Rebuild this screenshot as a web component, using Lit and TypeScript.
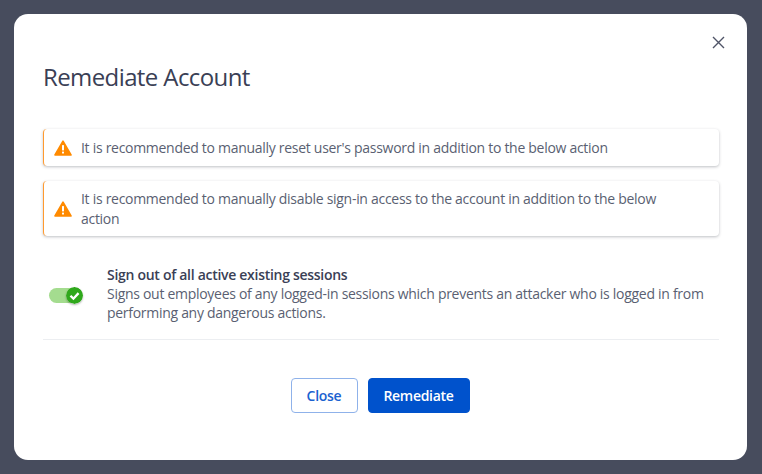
import { LitElement, html, css } from "lit";
import { customElement } from "lit/decorators.js";

const warn = html`<svg class="warn" viewBox="0 0 18 16" width="18" height="16" aria-hidden="true">
  <path d="M9 1.2 L17 15 L1 15 Z" fill="#ff8a00" stroke="#ff8a00" stroke-width="1.6" stroke-linejoin="round"/>
  <rect x="8" y="5" width="2" height="5.4" rx="0.6" fill="#fff"/>
  <rect x="8" y="11.6" width="2" height="2" rx="0.6" fill="#fff"/>
</svg>`;

@customElement("app-root")
export class AppRoot extends LitElement {
  static styles = css`
    :host {
      display: block;
      width: 762px;
      height: 474px;
      overflow: hidden;
      background: #474c5d;
      font-family: "Open Sans", "Liberation Sans", sans-serif;
    }
    .overlay {
      box-sizing: border-box;
      height: 474px;
      padding: 14px 15px 14px 14px;
    }
    .modal {
      box-sizing: border-box;
      height: 446px;
      background: #fff;
      border-radius: 14px;
      padding: 0 28px 0 29px;
      display: flex;
      flex-direction: column;
      position: relative;
    }
    .close {
      position: absolute;
      top: 22px;
      right: 22px;
      width: 13px;
      height: 13px;
      display: block;
    }
    h1 {
      margin: 46px 0 0;
      font-size: 24px;
      letter-spacing: -0.6px;
      line-height: 33px;
      font-weight: 400;
      color: #3a4055;
    }
    .alerts {
      margin-top: 36px;
      display: flex;
      flex-direction: column;
      gap: 15px;
    }
    .alert {
      box-sizing: border-box;
      display: flex;
      align-items: center;
      gap: 9px;
      padding: 7.5px 50px 7.5px 10px;
      min-height: 37px;
      background: #fff;
      border-left: 1.5px solid #ff9a2e;
      border-radius: 4px;
      box-shadow: 0 1px 3px rgba(40, 45, 60, 0.3);
      font-size: 14px;
      letter-spacing: -0.29px;
      line-height: 20px;
      color: #5a5f72;
    }
    .alert .warn { flex: none; }
    .alert span { flex: 1; }
    .option {
      margin-top: 29px;
      padding-bottom: 17px;
      border-bottom: 1px solid #eceef1;
      display: flex;
      align-items: center;
      gap: 24px;
    }
    .toggle {
      flex: none;
      margin: 3px 0 0 6px;
      position: relative;
      width: 34px;
      height: 15px;
      border-radius: 8px;
      background: #a4dc8f;
    }
    .knob {
      position: absolute;
      right: 0;
      top: -1px;
      width: 17px;
      height: 17px;
      display: block;
      border-radius: 50%;
      box-shadow: 0 1px 2px rgba(0, 0, 0, 0.3);
    }
    .info { font-size: 14px; letter-spacing: -0.29px; line-height: 19px; color: #5a5f72; }
    .info strong {
      display: block;
      font-weight: 600;
      color: #3a4055;
    }
    .actions {
      margin-top: 38px;
      padding-right: 2px;
      display: flex;
      justify-content: center;
      gap: 10px;
    }
    button {
      box-sizing: border-box;
      height: 35px;
      border-radius: 4px;
      font-family: inherit;
      font-size: 14px;
      letter-spacing: -0.29px;
      font-weight: 600;
      padding: 0;
    }
    .secondary {
      width: 67px;
      background: #fff;
      color: #1a62d0;
      border: 1px solid #8fb2ea;
    }
    .primary {
      width: 102px;
      background: #0052cc;
      color: #fff;
      border: 1px solid #0052cc;
    }
  `;

  render() {
    return html`<div class="overlay">
      <div class="modal">
        <svg class="close" viewBox="0 0 13 13" aria-label="Close">
          <path d="M1 1 L12 12 M12 1 L1 12" stroke="#4f5467" stroke-width="1.4" fill="none"/>
        </svg>
        <h1>Remediate Account</h1>
        <div class="alerts">
          <div class="alert">${warn}<span>It is recommended to manually reset user's password in addition to the below action</span></div>
          <div class="alert">${warn}<span>It is recommended to manually disable sign-in access to the account in addition to the below action</span></div>
        </div>
        <div class="option">
          <div class="toggle">
            <svg class="knob" viewBox="0 0 16 16" aria-hidden="true">
              <circle cx="8" cy="8" r="8" fill="#2fa81c"/>
              <path d="M4.2 8.2 L7 11 L11.8 5.8" stroke="#fff" stroke-width="2.2" fill="none"/>
            </svg>
          </div>
          <div class="info">
            <strong>Sign out of all active existing sessions</strong>
            Signs out employees of any logged-in sessions which prevents an attacker who is logged in from performing any dangerous actions.
          </div>
        </div>
        <div class="actions">
          <button class="secondary">Close</button>
          <button class="primary">Remediate</button>
        </div>
      </div>
    </div>`;
  }
}
